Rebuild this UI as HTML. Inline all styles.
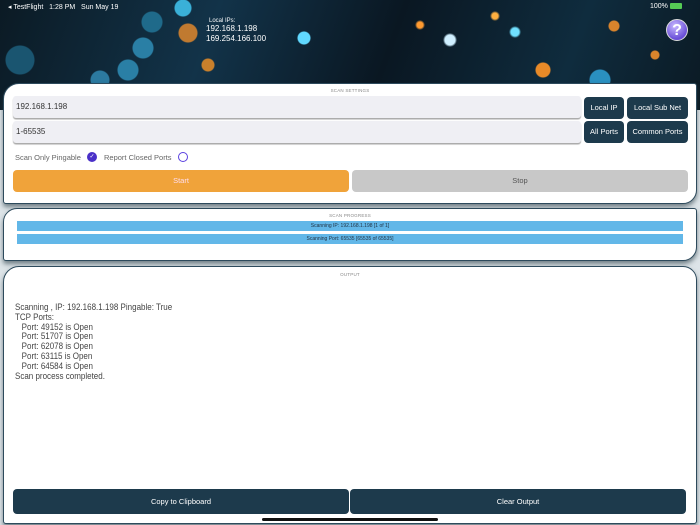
<!DOCTYPE html>
<html><head><meta charset="utf-8"><style>
*{margin:0;padding:0;box-sizing:border-box}
body{width:700px;height:525px;overflow:hidden;position:relative;font-family:"Liberation Sans",sans-serif;background:#dde4e8}
.hdr{position:absolute;left:0;top:0;width:700px;height:110px;background:
radial-gradient(circle at 183px 8px,#3ab0d8 8px,transparent 9px),
radial-gradient(circle at 152px 22px,#1f6a8a 10px,transparent 11px),
radial-gradient(circle at 188px 33px,#c07a30 9px,transparent 10px),
radial-gradient(circle at 143px 48px,#2a7fa5 10px,transparent 11px),
radial-gradient(circle at 208px 65px,#c9802b 6px,transparent 7px),
radial-gradient(circle at 128px 70px,#2a7fa5 10px,transparent 11px),
radial-gradient(circle at 304px 38px,#60d8ff 6px,transparent 7px),
radial-gradient(circle at 450px 40px,#cfefff 5px,transparent 7px),
radial-gradient(circle at 420px 25px,#ff9a30 3px,transparent 5px),
radial-gradient(circle at 495px 16px,#ffb040 3px,transparent 5px),
radial-gradient(circle at 543px 70px,#e88a28 7px,transparent 8px),
radial-gradient(circle at 515px 32px,#70e0ff 4px,transparent 6px),
radial-gradient(circle at 614px 26px,#d8842c 5px,transparent 6px),
radial-gradient(circle at 655px 55px,#d8842c 4px,transparent 5px),
radial-gradient(circle at 20px 60px,#1a5570 14px,transparent 15px),
radial-gradient(circle at 100px 80px,#2c7aa0 9px,transparent 10px),
radial-gradient(circle at 600px 80px,#2a90c0 10px,transparent 11px),
linear-gradient(110deg,#0b1a24 0%,#123349 30%,#0a1722 55%,#0f2c3e 80%,#0b1a24 100%)}
.sb{position:absolute;top:3px;font-size:7px;color:#fff}
.ips{position:absolute;left:206px;top:18px;color:#fff}
.help{position:absolute;left:666px;top:19px;width:22px;height:22px;border-radius:50%;background:radial-gradient(circle at 40% 30%,#c8b8ff,#6a4fd8 70%);color:#fff;font-weight:bold;font-size:16px;text-align:center;line-height:22px;border:1px solid #ddd}
.card{position:absolute;left:3px;width:694px;background:#fff;border:1.5px solid #2d4a5c;box-shadow:0 3px 5px rgba(40,60,70,.6)}
.lbl{position:absolute;width:100%;text-align:center;font-size:4.5px;color:#888;letter-spacing:.2px}
.inp{position:absolute;left:9px;width:568px;height:22px;background:#efeff4;border-radius:3px;box-shadow:0 1.5px 1px #aaa;font-size:8px;color:#333;padding:6px 3px;line-height:10px}
.btn{position:absolute;height:22px;background:#1d3a4c;border-radius:4px;color:#fff;font-size:7.5px;text-align:center;line-height:22px}
.bar{position:absolute;left:13px;width:666px;height:10px;background:#62b7e8;font-size:5px;color:#234;text-align:center;line-height:10px}
.out{position:absolute;left:11px;top:36px;font-size:9px;color:#444;line-height:9.8px;transform:scaleX(.89);transform-origin:left top}
</style></head><body>
<div class="hdr"></div>
<div class="sb" style="left:8px">◂ TestFlight &nbsp;&nbsp;1:28 PM &nbsp;&nbsp;Sun May 19</div>
<div class="sb" style="left:650px">100% <span style="display:inline-block;width:12px;height:6px;background:#5c5;border-radius:1px;vertical-align:middle"></span></div>
<div class="ips"><div style="font-size:6px;margin-left:3px">Local IPs:</div><div style="font-size:8px;line-height:10px">192.168.1.198<br>169.254.166.100</div></div>
<div class="help">?</div>

<div class="card" style="top:83px;height:121px;border-radius:16px 3px 14px 3px">
<div class="lbl" style="top:4px">SCAN SETTINGS</div>
<div class="inp" style="top:12px">192.168.1.198</div>
<div class="inp" style="top:37px">1-65535</div>
<div class="btn" style="left:580px;top:13px;width:40px">Local IP</div>
<div class="btn" style="left:623px;top:13px;width:61px">Local Sub Net</div>
<div class="btn" style="left:580px;top:37px;width:40px">All Ports</div>
<div class="btn" style="left:623px;top:37px;width:61px">Common Ports</div>
<div style="position:absolute;left:11px;top:69px;font-size:7.5px;color:#666">Scan Only Pingable</div>
<div style="position:absolute;left:83px;top:68px;width:10px;height:10px;border-radius:50%;background:#4a30c8;color:#fff;font-size:6px;text-align:center;line-height:10px">✓</div>
<div style="position:absolute;left:100px;top:69px;font-size:7.5px;color:#666">Report Closed Ports</div>
<div style="position:absolute;left:174px;top:68px;width:10px;height:10px;border-radius:50%;border:1.3px solid #5a40e0"></div>
<div class="btn" style="left:9px;top:86px;width:336px;background:#f0a33a;color:#fde">Start</div>
<div class="btn" style="left:348px;top:86px;width:336px;background:#c8c8c8;color:#555">Stop</div>
</div>

<div class="card" style="top:208px;height:53px;border-radius:14px 3px 14px 3px">
<div class="lbl" style="top:4px">SCAN PROGRESS</div>
<div class="bar" style="top:12px">Scanning IP: 192.168.1.198 [1 of 1]</div>
<div class="bar" style="top:25px">Scanning Port: 65535 [65535 of 65535]</div>
</div>

<div class="card" style="top:266px;height:258px;border-radius:16px 14px 3px 3px">
<div class="lbl" style="top:5px">OUTPUT</div>
<div class="out">Scanning , IP: 192.168.1.198 Pingable: True<br>TCP Ports:<br>&nbsp;&nbsp;&nbsp;Port: 49152 is Open<br>&nbsp;&nbsp;&nbsp;Port: 51707 is Open<br>&nbsp;&nbsp;&nbsp;Port: 62078 is Open<br>&nbsp;&nbsp;&nbsp;Port: 63115 is Open<br>&nbsp;&nbsp;&nbsp;Port: 64584 is Open<br>Scan process completed.</div>
<div class="btn" style="left:9px;top:222px;width:336px;height:25px;line-height:25px">Copy to Clipboard</div>
<div class="btn" style="left:346px;top:222px;width:336px;height:25px;line-height:25px">Clear Output</div>
<div style="position:absolute;left:258px;top:251px;width:176px;height:3px;border-radius:2px;background:#111"></div>
</div>
</body></html>
